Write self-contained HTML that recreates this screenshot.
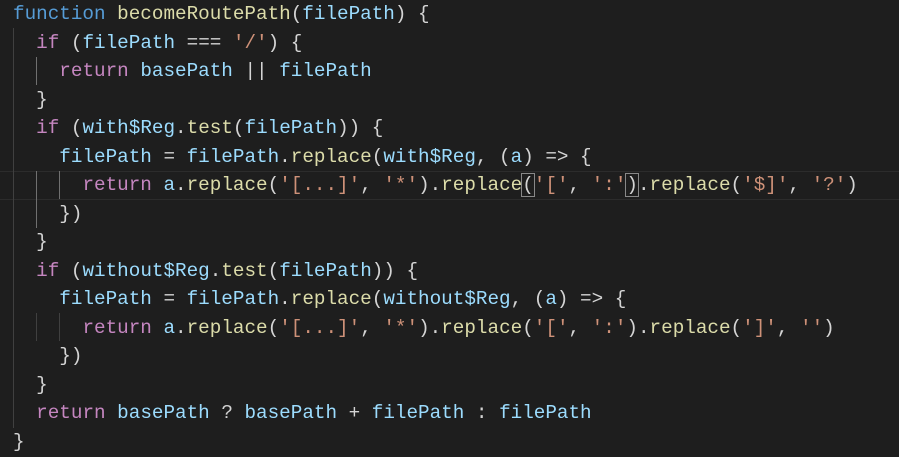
<!DOCTYPE html>
<html><head><style>
html,body{margin:0;padding:0;background:#1e1e1e;width:899px;height:457px;overflow:hidden}
.l{position:absolute;left:13px;height:28.5px;line-height:28.5px;white-space:pre;font-family:"Liberation Mono",monospace;font-size:19.3px;color:#d4d4d4}
.k{color:#569cd6}.f{color:#dcdcaa}.v{color:#9cdcfe}.c{color:#c586c0}.s{color:#ce9178}
.g{position:absolute;width:1px;background:#404040}
.hl{position:absolute;left:0;width:899px;top:171px;height:27px;border-top:1px solid #2c2c2c;border-bottom:1px solid #2c2c2c}
.bm{outline:1px solid #888;}
</style></head><body>
<div class="hl"></div>
<div class="g" style="left:13px;top:28px;height:400px"></div>
<div class="g" style="left:36px;top:57px;height:28px;background:#707070"></div>
<div class="g" style="left:36px;top:171px;height:57px;background:#707070"></div>
<div class="g" style="left:36px;top:313px;height:28px"></div>
<div class="g" style="left:59px;top:171px;height:28px;background:#707070"></div>
<div class="g" style="left:59px;top:313px;height:28px"></div>
<div class="l" style="top:0"><span class="k">function</span> <span class="f">becomeRoutePath</span>(<span class="v">filePath</span>) {</div>
<div class="l" style="top:28.5px">  <span class="c">if</span> (<span class="v">filePath</span> === <span class="s">'/'</span>) {</div>
<div class="l" style="top:57px">    <span class="c">return</span> <span class="v">basePath</span> || <span class="v">filePath</span></div>
<div class="l" style="top:85.5px">  }</div>
<div class="l" style="top:114px">  <span class="c">if</span> (<span class="v">with$Reg</span>.<span class="f">test</span>(<span class="v">filePath</span>)) {</div>
<div class="l" style="top:142.5px">    <span class="v">filePath</span> = <span class="v">filePath</span>.<span class="f">replace</span>(<span class="v">with$Reg</span>, (<span class="v">a</span>) =&gt; {</div>
<div class="l" style="top:171px">      <span class="c">return</span> <span class="v">a</span>.<span class="f">replace</span>(<span class="s">'[...]'</span>, <span class="s">'*'</span>).<span class="f">replace</span><span class="bm">(</span><span class="s">'['</span>, <span class="s">':'</span><span class="bm">)</span>.<span class="f">replace</span>(<span class="s">'$]'</span>, <span class="s">'?'</span>)</div>
<div class="l" style="top:199.5px">    })</div>
<div class="l" style="top:228px">  }</div>
<div class="l" style="top:256.5px">  <span class="c">if</span> (<span class="v">without$Reg</span>.<span class="f">test</span>(<span class="v">filePath</span>)) {</div>
<div class="l" style="top:285px">    <span class="v">filePath</span> = <span class="v">filePath</span>.<span class="f">replace</span>(<span class="v">without$Reg</span>, (<span class="v">a</span>) =&gt; {</div>
<div class="l" style="top:313.5px">      <span class="c">return</span> <span class="v">a</span>.<span class="f">replace</span>(<span class="s">'[...]'</span>, <span class="s">'*'</span>).<span class="f">replace</span>(<span class="s">'['</span>, <span class="s">':'</span>).<span class="f">replace</span>(<span class="s">']'</span>, <span class="s">''</span>)</div>
<div class="l" style="top:342px">    })</div>
<div class="l" style="top:370.5px">  }</div>
<div class="l" style="top:399px">  <span class="c">return</span> <span class="v">basePath</span> ? <span class="v">basePath</span> + <span class="v">filePath</span> : <span class="v">filePath</span></div>
<div class="l" style="top:427.5px">}</div>
</body></html>
